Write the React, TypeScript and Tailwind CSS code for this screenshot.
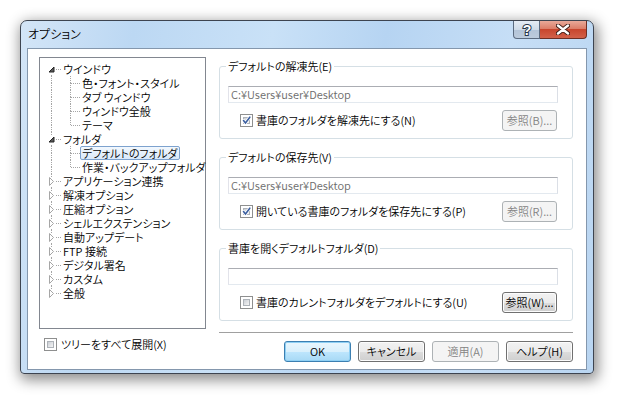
import { Fragment } from "react";

// Types
type TreeNode = {
  label: string;
  open?: boolean;
  children?: string[];
};

// Data
const tree: TreeNode[] = [
  { label: "ウインドウ", open: true, children: ["色・フォント・スタイル", "タブ ウィンドウ", "ウィンドウ全般", "テーマ"] },
  { label: "フォルダ", open: true, children: ["デフォルトのフォルダ", "作業・バックアップフォルダ"] },
  { label: "アプリケーション連携" },
  { label: "解凍オプション" },
  { label: "圧縮オプション" },
  { label: "シェルエクステンション" },
  { label: "自動アップデート" },
  { label: "FTP 接続" },
  { label: "デジタル署名" },
  { label: "カスタム" },
  { label: "全般" },
];

const selected = "デフォルトのフォルダ";

const groups = [
  { legend: "デフォルトの解凍先(E)", path: "C:¥Users¥user¥Desktop", check: "書庫のフォルダを解凍先にする(N)", checked: true, button: "参照(B)...", enabled: false },
  { legend: "デフォルトの保存先(V)", path: "C:¥Users¥user¥Desktop", check: "開いている書庫のフォルダを保存先にする(P)", checked: true, button: "参照(R)...", enabled: false },
  { legend: "書庫を開くデフォルトフォルダ(D)", path: "", check: "書庫のカレントフォルダをデフォルトにする(U)", checked: false, button: "参照(W)...", enabled: true },
];

// Tree connector cell
type CellProps = { up?: boolean; down?: boolean; right?: boolean; children?: React.ReactNode };

const Cell = ({ up, down, right, children }: CellProps) => (
  <span className="relative flex h-[14px] w-[19px] shrink-0 items-center justify-center">
    {up && <span className="absolute left-[9px] top-0 h-[7px] border-l border-dotted border-[#a5a5a5]" />}
    {down && <span className="absolute left-[9px] top-[7px] h-[7px] border-l border-dotted border-[#a5a5a5]" />}
    {right && <span className="absolute left-[10px] top-[7px] w-[9px] border-t border-dotted border-[#a5a5a5]" />}
    {children}
  </span>
);

const Expander = ({ open }: { open: boolean }) => (
  <span className="relative z-10 flex h-[9px] w-[7px] items-center justify-center bg-white">
    {open ? (
      <svg width="7" height="7" viewBox="0 0 7 7">
        <polygon points="6,1 6,6 1,6" fill="#595959" stroke="#262626" strokeWidth="1" strokeLinejoin="round" />
      </svg>
    ) : (
      <svg width="5" height="9" viewBox="0 0 5 9">
        <polygon points="0.5,0.5 4.5,4.5 0.5,8.5" fill="white" stroke="#a6a6a6" strokeWidth="1" />
      </svg>
    )}
  </span>
);

const Label = ({ text, active }: { text: string; active?: boolean }) => (
  <span
    className={`flex h-[14px] items-center whitespace-nowrap rounded-[2px] border px-[1px] leading-[11px] ${
      active ? "border-[#7da2ce] bg-[linear-gradient(#f2f8fe,#d9e9fa)]" : "border-transparent"
    }`}
  >
    {text}
  </span>
);

// Win7 checkbox
const CheckBox = ({ checked }: { checked: boolean }) => (
  <span className="relative flex h-[13px] w-[13px] shrink-0 border border-[#8e8f8f] bg-white p-[2px]">
    <span className="flex-1 border border-[#aeb3b9] bg-[linear-gradient(135deg,#cbcfd5,#f5f5f5)]" />
    {checked && (
      <svg className="absolute left-0 top-0" width="11" height="11" viewBox="0 0 11 11">
        <path d="M2.5 5.5 L4.5 8 L8.8 2.2" fill="none" stroke="#ffffff" strokeWidth="3" strokeLinecap="round" />
        <path d="M2.5 5.5 L4.5 8 L8.8 2.2" fill="none" stroke="#3a5ea0" strokeWidth="1.6" strokeLinecap="round" />
      </svg>
    )}
  </span>
);

type BtnProps = { children: React.ReactNode; disabled?: boolean; primary?: boolean; className?: string };

const Button = ({ children, disabled, primary, className = "" }: BtnProps) => (
  <button
    className={`flex items-center justify-center rounded-[3px] border text-[11px] leading-none ${className} ${
      disabled
        ? "border-[#adb2b5] bg-[#f4f4f4] text-[#838383]"
        : primary
        ? "border-[#3c7fb1] bg-[linear-gradient(#eaf6fd_0%,#d9f0fc_50%,#bee6fd_51%,#a7d9f5_100%)] text-black shadow-[inset_0_0_0_1px_#8fd0f4]"
        : "border-[#707070] bg-[linear-gradient(#f2f2f2_0%,#ebebeb_50%,#dddddd_51%,#cfcfcf_100%)] text-black shadow-[inset_0_0_0_1px_#fcfcfc]"
    }`}
  >
    {children}
  </button>
);

export default function App() {
  return (
    <div className="h-[396px] w-[618px] overflow-hidden bg-white pl-[20px] pt-[20px] font-['Noto_Sans_CJK_JP','Noto_Sans',sans-serif] text-[11px] text-black [font-feature-settings:'palt'] [font-weight:350]">
      {/* Window */}
      <div className="flex h-[354px] w-[574px] flex-col rounded-t-[7px] rounded-b-[4px] border border-[#3d4450] bg-[linear-gradient(100deg,#d3e5f7_0%,#bcd8f3_18%,#c9e1f7_40%,#b6d4f2_58%,#c6def6_78%,#b9d5f1_100%)] shadow-[2px_4px_14px_2px_rgba(0,0,0,0.45)]">
        {/* Title bar */}
        <div className="flex h-[27px] items-start justify-between pl-[7px] pr-[6px]">
          <span className="mt-[7px] text-[12px] leading-[12px]">オプション</span>
          <div className="flex">
            <span className="flex h-[18px] w-[27px] items-center justify-center rounded-bl-[4px] border border-t-0 border-[#5b6b80] bg-[linear-gradient(#e4ecf5_0%,#cfdbe8_50%,#b3c4d8_51%,#bccbdc_100%)]">
              <svg width="12" height="14" viewBox="0 0 12 14">
                <text x="6" y="12" textAnchor="middle" fontSize="14" fontWeight="bold" fontFamily="Liberation Sans, sans-serif" fill="#ffffff" stroke="#27374a" strokeWidth="2" paintOrder="stroke">
                  ?
                </text>
              </svg>
            </span>
            <span className="flex h-[18px] w-[47px] items-center justify-center rounded-br-[4px] border border-l-0 border-t-0 border-[#6d2f25] bg-[linear-gradient(#e9a999_0%,#dc7e69_45%,#c8462e_50%,#d2614a_100%)]">
              <svg width="14" height="11" viewBox="0 0 14 11">
                <path d="M2 1.5 L7 5.5 L12 1.5 M2 9.5 L7 5.5 L12 9.5" stroke="#3a1a14" strokeWidth="4.2" strokeLinecap="round" fill="none" />
                <path d="M2 1.5 L7 5.5 L12 1.5 M2 9.5 L7 5.5 L12 9.5" stroke="#ffffff" strokeWidth="2.4" strokeLinecap="round" fill="none" />
              </svg>
            </span>
          </div>
        </div>

        {/* Client area */}
        <div className="mx-[6px] mb-[3px] flex flex-1 border border-[#8497ad] bg-white pl-[11px] pr-[14px]">
          {/* Left: tree */}
          <div className="flex w-[167px] shrink-0 flex-col pt-[8px]">
            <div className="h-[272px] border border-[#828790] bg-white pl-[2px] pt-[4px]">
              {tree.map((n, i) => (
                <Fragment key={n.label}>
                  <div className="flex h-[14px]">
                    <Cell up={i > 0} down={i < tree.length - 1} right>
                      <Expander open={!!n.open} />
                    </Cell>
                    <Label text={n.label} />
                  </div>
                  {n.open &&
                    n.children!.map((c, j) => (
                      <div key={c} className="flex h-[14px]">
                        <Cell up down={i < tree.length - 1} />
                        <Cell up down={j < n.children!.length - 1} right />
                        <Label text={c} active={c === selected} />
                      </div>
                    ))}
                </Fragment>
              ))}
            </div>
            <div className="mt-[9px] flex items-center gap-[4px] pl-[5px]">
              <CheckBox checked={false} />
              <span className="leading-[13px]">ツリーをすべて展開(X)</span>
            </div>
          </div>

          {/* Right: settings */}
          <div className="ml-[13px] flex w-[354px] shrink-0 flex-col pt-[10px]">
            {groups.map((g, i) => (
              <fieldset
                key={g.legend}
                className={`rounded-[3px] border border-[#d5dfe5] px-0 pb-[7px] pt-[13px] ${i > 0 ? "mt-[11px]" : ""}`}
              >
                <legend className="ml-[6px] px-[2px] leading-[14px]">{g.legend}</legend>
                <div className="ml-[8px] h-[17px] w-[330px] border border-[#abadb3] border-b-[#e3e9ef] border-l-[#e2e3ea] border-r-[#dbdfe6] bg-white pl-[2px] leading-[15px] text-[#6d6d6d]">
                  {g.path}
                </div>
                <div className="mt-[7px] flex h-[21px] items-center pl-[20px] pr-[15px]">
                  <CheckBox checked={g.checked} />
                  <span className="ml-[3px] flex-1 leading-[13px]">{g.check}</span>
                  <Button disabled={!g.enabled} className="h-[21px] w-[55px]">
                    {g.button}
                  </Button>
                </div>
              </fieldset>
            ))}

            <div className="mt-[11px] h-px bg-[#a0a0a0]" />

            <div className="mt-[8px] flex justify-end gap-[7px]">
              <Button primary className="h-[21px] w-[67px]">OK</Button>
              <Button className="h-[21px] w-[67px]">キャンセル</Button>
              <Button disabled className="h-[21px] w-[67px]">適用(A)</Button>
              <Button className="h-[21px] w-[67px]">ヘルプ(H)</Button>
            </div>
          </div>
        </div>
      </div>
    </div>
  );
}
